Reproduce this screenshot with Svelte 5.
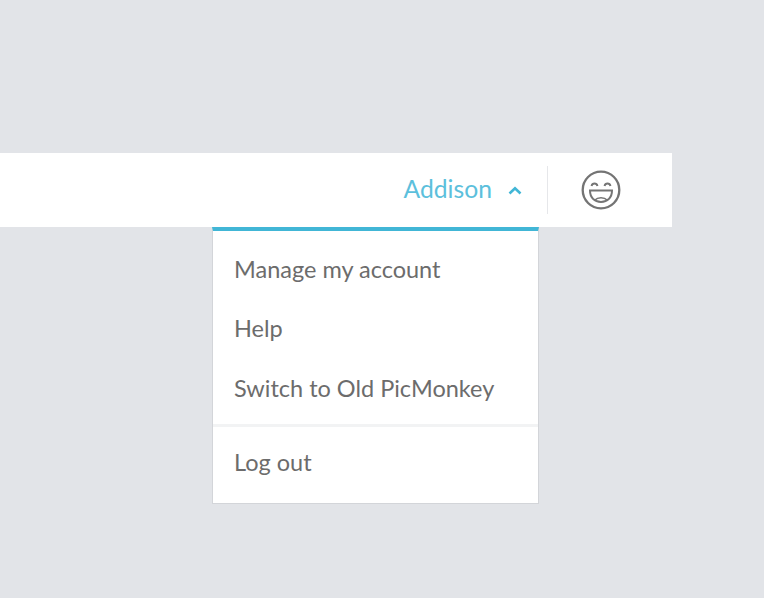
<script>
  const items = ['Manage my account', 'Help', 'Switch to Old PicMonkey'];
</script>

<div class="page">
  <header class="bar">
    <button class="user">
      <span>Addison</span>
      <svg width="14" height="9" viewBox="0 0 14 9" fill="none" stroke="#41b6d6" stroke-width="2.6">
        <path d="M1.5 7.5 7 2.2l5.5 5.3" />
      </svg>
    </button>
    <div class="divider"></div>
    <div class="avatar">
      <svg width="40" height="40" viewBox="0 0 40 40" fill="none" stroke="#747474" stroke-width="2.3">
        <circle cx="20" cy="20" r="18.300" />
        <path d="M10.500 16c.8-3.400 5.200-3.400 6 0M23.500 16c.8-3.400 5.200-3.400 6 0" stroke-width="1.900" />
        <path d="M9 20.500h22c0 7-4.500 11.500-11 11.500S9 27.500 9 20.500Z" stroke-width="2" />
        <path d="M14 30c2.500-3 9.500-3 12 0" stroke-width="1.500" />
      </svg>
    </div>
  </header>

  <nav class="menu">
    <div class="group">
      {#each items as item}
        <div class="item">{item}</div>
      {/each}
    </div>
    <div class="group last">
      <div class="item">Log out</div>
    </div>
  </nav>
</div>

<style>
  :global(body) {
    margin: 0;
    background: #e2e4e8;
  }

  .page {
    height: 598px;
    padding-top: 153px;
    box-sizing: border-box;
    font-family: Lato, sans-serif;
    overflow: hidden;
  }

  .bar {
    width: 672px;
    height: 74px;
    background: #fff;
    display: flex;
    align-items: center;
    justify-content: flex-end;
    box-sizing: border-box;
    padding-right: 51px;
  }

  .user {
    display: flex;
    align-items: center;
    gap: 16px;
    border: none;
    background: none;
    padding: 0 0 3px;
    margin-right: 25px;
    font-family: inherit;
    font-size: 24.700px;
    color: #5cc0dc;
  }

  .user svg {
    margin-top: 3px;
  }

  .divider {
    width: 1px;
    height: 48px;
    background: #e6e7ea;
    margin-right: 33px;
  }

  .avatar {
    display: flex;
    width: 40px;
    height: 40px;
  }

  .menu {
    width: 327px;
    margin-left: 212px;
    box-sizing: border-box;
    background: #fff;
    border: 1px solid #d3d5d9;
    border-top: 4px solid #41b6d6;
    font-size: 23.500px;
    color: #6c6c6c;
  }

  .group {
    padding: 8.500px 0 5.500px;
  }

  .group.last {
    border-top: 3px solid #f2f3f4;
    padding: 6.500px 0 10.500px;
  }

  .item {
    height: 59.500px;
    line-height: 59.500px;
    padding-left: 21px;
  }
</style>
